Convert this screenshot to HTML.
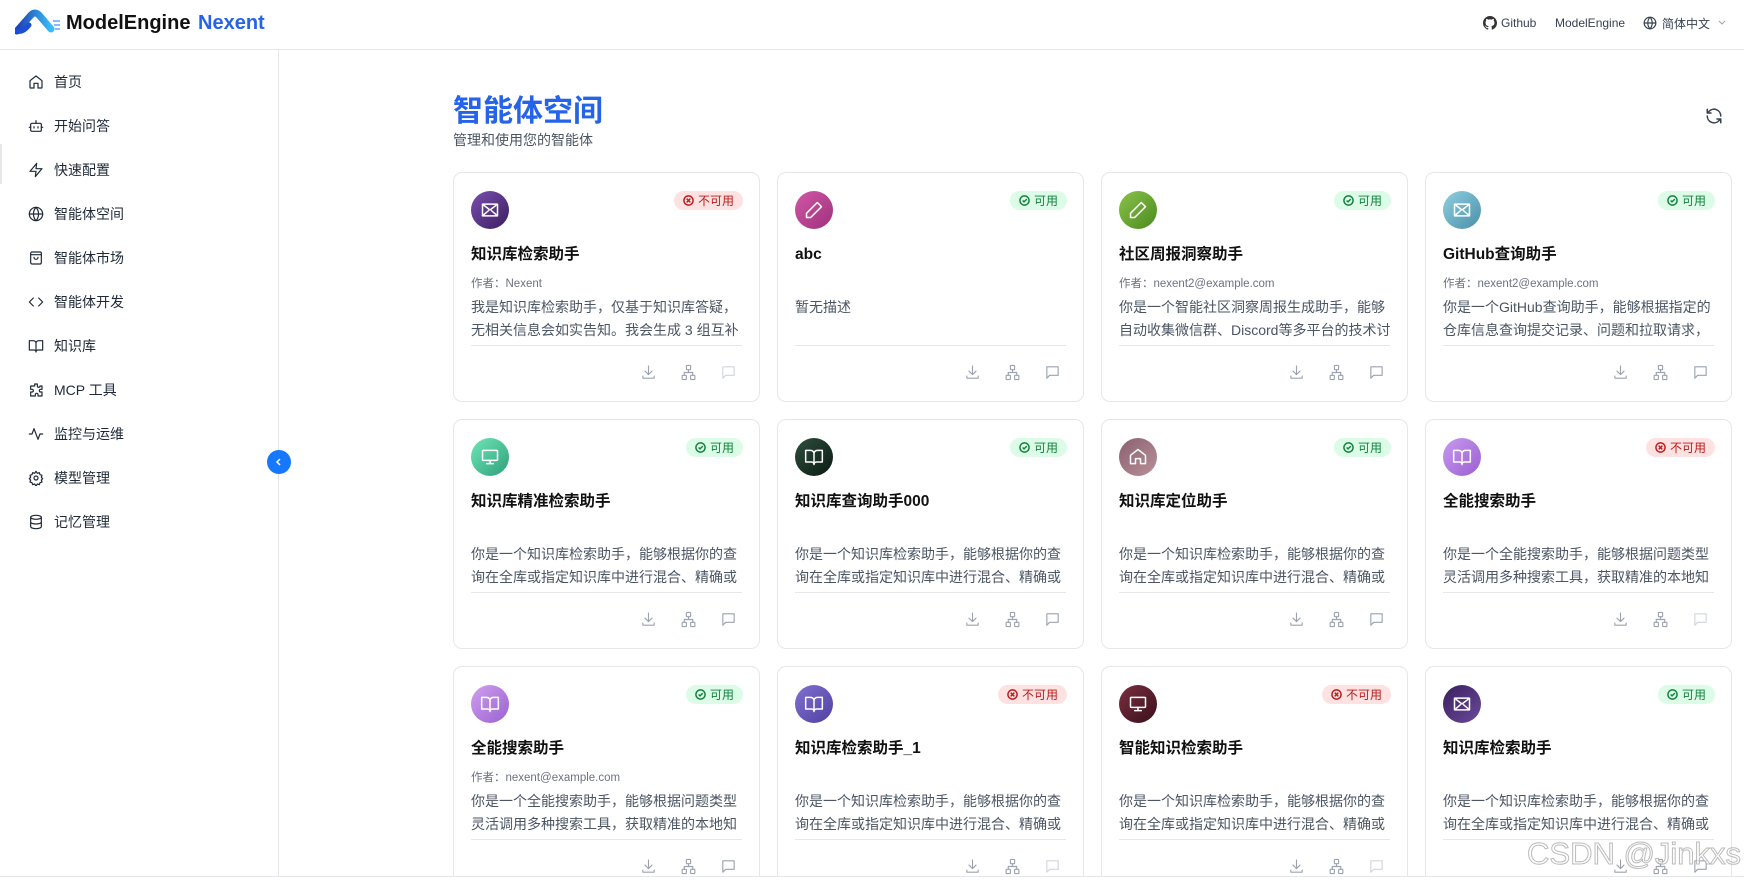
<!DOCTYPE html>
<html style="overflow:hidden;height:882px"><head><meta charset="utf-8">
<style>
*{box-sizing:border-box;margin:0;padding:0}
body{width:1744px;height:882px;overflow:hidden;background:#fff;font-family:"Liberation Sans","Noto Sans CJK SC",sans-serif;position:relative;color:#111827}
.hdr{position:absolute;left:0;top:0;width:1744px;height:50px;border-bottom:1px solid #e5e7eb}
.side{position:absolute;left:0;top:50px;width:279px;height:826px;border-right:1px solid #e5e7eb}
.nav{position:absolute;left:28px;height:24px;display:flex;align-items:center;font-size:14px;color:#1f2937}
.nav svg{width:16px;height:16px;margin-right:10px;stroke:#1f2937;fill:none;stroke-width:1.8;stroke-linecap:round;stroke-linejoin:round}
#cards{position:absolute;left:0;top:0;width:1744px;height:876px;overflow:hidden}
.card{position:absolute;width:307px;height:230px;border:1px solid #e5e7eb;border-radius:9px;background:#fff}
.av{position:absolute;left:17px;top:18px;width:38px;height:38px;border-radius:50%;display:flex;align-items:center;justify-content:center}
.av svg{width:20px;height:20px;stroke:#fff;fill:none;stroke-width:1.8;stroke-linecap:round;stroke-linejoin:round}
.bd{position:absolute;right:16px;top:18px;height:19px;border-radius:10px;font-size:12px;display:flex;align-items:center;padding:0 9px;gap:4px}
.ok{background:#dcfce7;color:#15803d}
.no{background:#fee2e2;color:#b91c1c}
.bd svg{width:11px;height:11px;fill:none;stroke:currentColor;stroke-width:1.6}
.tt{position:absolute;left:17px;top:71px;height:22px;line-height:22px;font-size:15.5px;font-weight:bold;color:#111}
.au{position:absolute;left:17px;top:102px;font-size:11.5px;color:#6b7280}
.ds{position:absolute;left:17px;top:123px;width:275px;font-size:14px;line-height:23px;color:#4b5563;height:46px;overflow:hidden}
.dv{position:absolute;left:17px;right:17px;top:172px;border-top:1px solid #e5e7eb}
.ft svg{position:absolute;top:191px;width:17px;height:17px;fill:none;stroke:#9ca3af;stroke-width:1.6;stroke-linecap:round;stroke-linejoin:round}
.ft .dis{stroke:#d1d5db}
</style></head><body>
<div class="hdr">
 <svg style="position:absolute;left:15px;top:9px" width="48" height="26" viewBox="0 0 48 26"><path d="M2 22 L16 6 Q20 2 24 6 L36 20" stroke="url(#g1)" stroke-width="7" fill="none" stroke-linecap="round"/><path d="M2 22 Q8 24 14 16" stroke="#1d4ed8" stroke-width="5" fill="none" stroke-linecap="round"/><path d="M38 12l7 0M39 16l6 0M40 20l5 0" stroke="#60a5fa" stroke-width="1.5"/><defs><linearGradient id="g1" x1="0" x2="1"><stop offset="0" stop-color="#1e40af"/><stop offset="1" stop-color="#38bdf8"/></linearGradient></defs></svg>
 <div style="position:absolute;left:66px;top:12px;font-size:20px;font-weight:bold;color:#111">ModelEngine</div>
 <div style="position:absolute;left:198px;top:12px;font-size:20px;font-weight:bold;color:#2563eb">Nexent</div>
 <svg style="position:absolute;left:1483px;top:16px" width="14" height="14" viewBox="0 0 16 16"><path fill="#333" d="M8 0C3.6 0 0 3.6 0 8c0 3.5 2.3 6.5 5.5 7.6.4.1.5-.2.5-.4v-1.4c-2.2.5-2.7-1-2.7-1-.4-.9-.9-1.2-.9-1.2-.7-.5.1-.5.1-.5.8.1 1.2.8 1.2.8.7 1.2 1.9.9 2.3.7.1-.5.3-.9.5-1.1-1.8-.2-3.6-.9-3.6-4 0-.9.3-1.6.8-2.1-.1-.2-.4-1 .1-2.1 0 0 .7-.2 2.2.8.6-.2 1.3-.3 2-.3s1.4.1 2 .3c1.5-1 2.2-.8 2.2-.8.4 1.1.2 1.9.1 2.1.5.6.8 1.3.8 2.1 0 3.1-1.9 3.7-3.6 3.9.3.3.5.8.5 1.5v2.2c0 .2.1.5.6.4C13.7 14.5 16 11.5 16 8c0-4.4-3.6-8-8-8z"/></svg>
 <div style="position:absolute;left:1501px;top:16px;font-size:12px;color:#374151">Github</div>
 <div style="position:absolute;left:1555px;top:16px;font-size:12px;color:#374151">ModelEngine</div>
 <svg style="position:absolute;left:1643px;top:16px" width="14" height="14" viewBox="0 0 24 24" fill="none" stroke="#374151" stroke-width="2"><circle cx="12" cy="12" r="10"/><path d="M2 12h20M12 2a15 15 0 0 1 0 20M12 2a15 15 0 0 0 0 20"/></svg>
 <div style="position:absolute;left:1662px;top:15px;font-size:12px;color:#374151">简体中文</div>
 <svg style="position:absolute;left:1718px;top:20px" width="8" height="6" viewBox="0 0 8 6"><path d="M1 1l3 3 3-3" stroke="#9ca3af" fill="none"/></svg>
</div>
<div class="side">
 <div style="position:absolute;left:0;top:94px;width:2px;height:40px;background:#e5e7eb"></div>
 <div class="nav" style="top:20px"><svg viewBox="0 0 24 24"><path d="M3 10l9-7 9 7v10a1 1 0 0 1-1 1h-5v-7h-6v7H4a1 1 0 0 1-1-1z"/></svg>首页</div>
 <div class="nav" style="top:64px"><svg viewBox="0 0 24 24"><rect x="4" y="8" width="16" height="12" rx="2"/><path d="M12 8V4M9 13v2M15 13v2M2 14h2M20 14h2"/></svg>开始问答</div>
 <div class="nav" style="top:108px"><svg viewBox="0 0 24 24"><path d="M13 2L3 14h9l-1 8 10-12h-9z"/></svg>快速配置</div>
 <div class="nav" style="top:152px"><svg viewBox="0 0 24 24"><circle cx="12" cy="12" r="10"/><path d="M2 12h20M12 2a15 15 0 0 1 0 20M12 2a15 15 0 0 0 0 20"/></svg>智能体空间</div>
 <div class="nav" style="top:196px"><svg viewBox="0 0 24 24"><rect x="4" y="3" width="16" height="18" rx="2"/><path d="M4 7h16M9 11a3 3 0 0 0 6 0"/></svg>智能体市场</div>
 <div class="nav" style="top:240px"><svg viewBox="0 0 24 24"><path d="M8 6l-6 6 6 6M16 6l6 6-6 6"/></svg>智能体开发</div>
 <div class="nav" style="top:284px"><svg viewBox="0 0 24 24"><path d="M2 4h6a4 4 0 0 1 4 4v13a3 3 0 0 0-3-3H2zM22 4h-6a4 4 0 0 0-4 4v13a3 3 0 0 1 3-3h7z"/></svg>知识库</div>
 <div class="nav" style="top:328px"><svg viewBox="0 0 24 24"><path d="M10 3h4v3a2 2 0 0 0 4 0h3v5h-2a2 2 0 0 0 0 4h2v6h-6v-2a2 2 0 0 0-4 0v2H4v-6h2a2 2 0 0 0 0-4H4V6h6z"/></svg>MCP 工具</div>
 <div class="nav" style="top:372px"><svg viewBox="0 0 24 24"><path d="M2 12h4l3-8 6 16 3-8h4"/></svg>监控与运维</div>
 <div class="nav" style="top:416px"><svg viewBox="0 0 24 24"><circle cx="12" cy="12" r="3"/><path d="M12 2l2 3 3-1 1 3 3 1-1 3 2 2-2 2 1 3-3 1-1 3-3-1-2 3-2-3-3 1-1-3-3-1 1-3-2-2 2-2-1-3 3-1 1-3 3 1z"/></svg>模型管理</div>
 <div class="nav" style="top:460px"><svg viewBox="0 0 24 24"><ellipse cx="12" cy="5" rx="8" ry="3"/><path d="M4 5v14c0 1.7 3.6 3 8 3s8-1.3 8-3V5M4 12c0 1.7 3.6 3 8 3s8-1.3 8-3"/></svg>记忆管理</div>
</div>
<div style="position:absolute;left:267px;top:450px;width:24px;height:24px;border-radius:50%;background:#1677ff;display:flex;align-items:center;justify-content:center"><svg width="10" height="10" viewBox="0 0 10 10"><path d="M6 2L3 5l3 3" stroke="#fff" stroke-width="1.5" fill="none"/></svg></div>
<div style="position:absolute;left:453px;top:86px;font-size:30px;font-weight:bold;color:#2563eb">智能体空间</div>
<div style="position:absolute;left:453px;top:130px;font-size:14px;color:#4b5563">管理和使用您的智能体</div>
<svg style="position:absolute;left:1705px;top:107px" width="18" height="18" viewBox="0 0 24 24" fill="none" stroke="#374151" stroke-width="2" stroke-linecap="round" stroke-linejoin="round"><path d="M21 12a9 9 0 0 0-15.5-6.3L3 8M3 3v5h5M3 12a9 9 0 0 0 15.5 6.3L21 16M21 21v-5h-5"/></svg>

<div id="cards"></div>
<div style="position:absolute;left:0;top:876px;width:1744px;height:6px;background:#fff;border-top:1px solid #e5e7eb;z-index:5"></div>
<div style="position:absolute;left:1527px;top:836px;height:36px;line-height:36px;font-size:31px;color:rgba(255,255,255,0.6);font-family:'Liberation Sans',sans-serif;-webkit-text-stroke:1px rgba(170,170,170,0.8);z-index:6">CSDN @Jinkxs</div>

<script>
var ic={
mail:'<rect x="3" y="5" width="18" height="14" rx="1"/><path d="M3 5l9 7 9-7M3 19l7-6M21 19l-7-6"/>',
pen:'<path d="M16 3l5 5L8 21H3v-5z"/>',
mon:'<rect x="3" y="4" width="18" height="12" rx="1"/><path d="M8 20h8M12 16v4"/>',
book:'<path d="M2 4h6a4 4 0 0 1 4 4v13a3 3 0 0 0-3-3H2zM22 4h-6a4 4 0 0 0-4 4v13a3 3 0 0 1 3-3h7z"/>',
home:'<path d="M3 10l9-7 9 7v10h-6v-6h-6v6H3z"/>'};
var d1='你是一个知识库检索助手，能够根据你的查询在全库或指定知识库中进行混合、精确或';
var d2='你是一个全能搜索助手，能够根据问题类型灵活调用多种搜索工具，获取精准的本地知';
var data=[
['mail','linear-gradient(135deg,#7a4fb0,#3b1d5e)',0,'知识库检索助手','作者：Nexent','我是知识库检索助手，仅基于知识库答疑，无相关信息会如实告知。我会生成 3 组互补'],
['pen','linear-gradient(135deg,#d058a8,#a0307a)',1,'abc','','暂无描述'],
['pen','linear-gradient(135deg,#8bc34a,#4a8a1e)',1,'社区周报洞察助手','作者：nexent2@example.com','你是一个智能社区洞察周报生成助手，能够自动收集微信群、Discord等多平台的技术讨'],
['mail','linear-gradient(135deg,#8fd0e0,#4a8fa8)',1,'GitHub查询助手','作者：nexent2@example.com','你是一个GitHub查询助手，能够根据指定的仓库信息查询提交记录、问题和拉取请求，'],
['mon','linear-gradient(135deg,#6ee7b7,#2f9f7a)',1,'知识库精准检索助手','',d1],
['book','linear-gradient(135deg,#2f4f3f,#0a1a12)',1,'知识库查询助手000','',d1],
['home','linear-gradient(135deg,#8a6070,#b89098)',1,'知识库定位助手','',d1],
['book','linear-gradient(135deg,#c89af0,#9a5fd0)',0,'全能搜索助手','',d2],
['book','linear-gradient(135deg,#d0a0f0,#9a60d0)',1,'全能搜索助手','作者：nexent@example.com',d2],
['book','linear-gradient(135deg,#8070d0,#5040a0)',0,'知识库检索助手_1','',d1],
['mon','linear-gradient(135deg,#7a3040,#3a0f1a)',0,'智能知识检索助手','',d1],
['mail','linear-gradient(135deg,#3a1f60,#6a4a9a)',1,'知识库检索助手','',d1]];
var xs=[453,777,1101,1425],ys=[172,419,666],h='';
var okI='<svg viewBox="0 0 12 12"><circle cx="6" cy="6" r="5"/><path d="M4 6l1.5 1.5L8.5 4.5"/></svg>';
var noI='<svg viewBox="0 0 12 12"><circle cx="6" cy="6" r="5"/><path d="M4 4l4 4M8 4l-4 4"/></svg>';
data.forEach(function(c,i){
 var x=xs[i%4],y=ys[Math.floor(i/4)];
 h+='<div class="card" style="left:'+x+'px;top:'+y+'px">'+
 '<div class="av" style="background:'+c[1]+'"><svg viewBox="0 0 24 24">'+ic[c[0]]+'</svg></div>'+
 (c[2]?'<div class="bd ok">'+okI+'可用</div>':'<div class="bd no">'+noI+'不可用</div>')+
 '<div class="tt">'+c[3]+'</div><div class="au">'+c[4]+'</div><div class="ds">'+c[5]+'</div><div class="dv"></div>'+
 '<div class="ft"><svg style="left:186px" viewBox="0 0 24 24"><path d="M12 3v12M7 10l5 5 5-5M4 17v3h16v-3"/></svg>'+
 '<svg style="left:226px" viewBox="0 0 24 24"><rect x="9" y="2" width="6" height="6" rx="1"/><rect x="3" y="16" width="6" height="6" rx="1"/><rect x="15" y="16" width="6" height="6" rx="1"/><path d="M12 8v4M6 16v-4h12v4"/></svg>'+
 '<svg class="'+(c[2]?'':'dis')+'" style="left:266px" viewBox="0 0 24 24"><path d="M4 4h16v12H8l-4 4z"/></svg></div></div>';
});
document.getElementById('cards').innerHTML=h;
</script>
</body></html>
